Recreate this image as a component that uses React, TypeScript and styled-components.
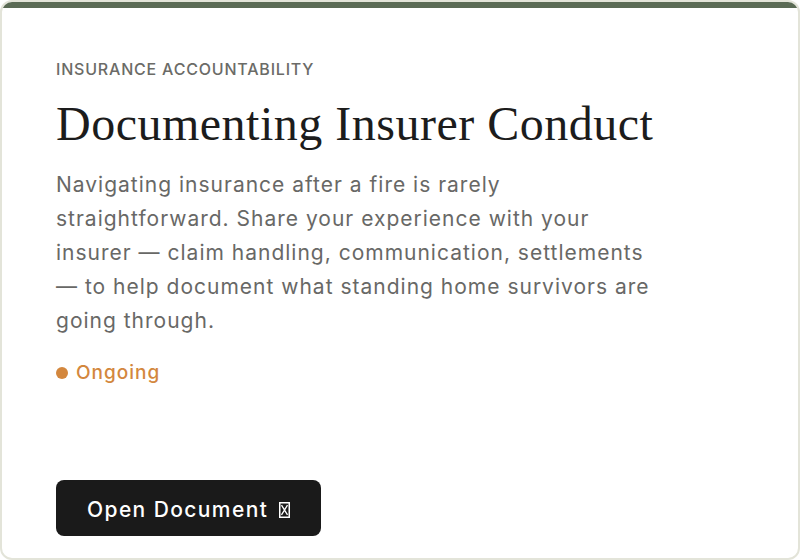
import { FC } from 'react';
import styled, { createGlobalStyle } from 'styled-components';

const GlobalStyle = createGlobalStyle`
  html, body {
    margin: 0;
    padding: 0;
    background: #ffffff;
  }

  * {
    box-sizing: border-box;
  }
`;

const Card = styled.section`
  width: 800px;
  height: 560px;
  display: flex;
  flex-direction: column;
  border: 2px solid #e3e4d9;
  border-radius: 12px;
  overflow: hidden;
  background: #ffffff;
  font-family: Inter, 'Open Sans', sans-serif;
`;

const TopBar = styled.div`
  height: 6px;
  flex-shrink: 0;
  background: #5b6b55;
`;

const Body = styled.div`
  flex: 1;
  display: flex;
  flex-direction: column;
  padding: 50px 54px 22px;
`;

const Eyebrow = styled.div`
  font-size: 16px;
  font-weight: 500;
  line-height: 22px;
  letter-spacing: 0.8px;
  color: #6b6b67;
  text-transform: uppercase;
`;

const Title = styled.h2`
  margin: 16px 0 0;
  font-family: 'Liberation Serif', 'DejaVu Serif', serif;
  font-size: 48px;
  font-weight: 400;
  line-height: 56px;
  letter-spacing: 0.5px;
  color: #1c1c1c;
`;

const Lead = styled.p`
  margin: 16px 0 0;
  max-width: 604px;
  font-size: 21px;
  line-height: 34px;
  letter-spacing: 1px;
  color: #686866;
`;

const Status = styled.div<{ $tone: string }>`
  display: flex;
  align-items: center;
  gap: 8px;
  margin-top: 23px;
  font-size: 19px;
  font-weight: 500;
  letter-spacing: 1px;
  color: ${({ $tone }) => $tone};

  &::before {
    content: '';
    width: 12px;
    height: 12px;
    border-radius: 50%;
    background: ${({ $tone }) => $tone};
  }
`;

const Action = styled.button`
  margin-top: auto;
  align-self: flex-start;
  display: flex;
  align-items: center;
  gap: 11px;
  height: 56px;
  padding: 3px 31px 0;
  border: none;
  border-radius: 8px;
  background: #1a1a1a;
  color: #ffffff;
  font-family: inherit;
  font-size: 21px;
  font-weight: 500;
  letter-spacing: 1.4px;
  cursor: pointer;
`;

// the glyph is missing in the original font, so it shows as a boxed X
const MissingGlyph: FC = () => (
  <svg width="11" height="16" viewBox="0 0 11 16" aria-hidden="true">
    <rect x="0.75" y="0.75" width="9.5" height="14.5" fill="none" stroke="#fff" strokeWidth="1.5" />
    <path d="M2.5 3.2 L8.5 12.8 M8.5 3.2 L2.5 12.8" stroke="#fff" strokeWidth="1.3" />
  </svg>
);

const App: FC = () => {
  return (
    <>
      <GlobalStyle />
      <Card>
        <TopBar />
        <Body>
          <Eyebrow>Insurance Accountability</Eyebrow>
          <Title>Documenting Insurer Conduct</Title>
          <Lead>
            Navigating insurance after a fire is rarely straightforward. Share your experience with your
            insurer — claim handling, communication, settlements — to help document what standing home
            survivors are going through.
          </Lead>
          <Status $tone="#d3873d">Ongoing</Status>
          <Action>
            Open Document<MissingGlyph />
          </Action>
        </Body>
      </Card>
    </>
  );
};

export default App;
